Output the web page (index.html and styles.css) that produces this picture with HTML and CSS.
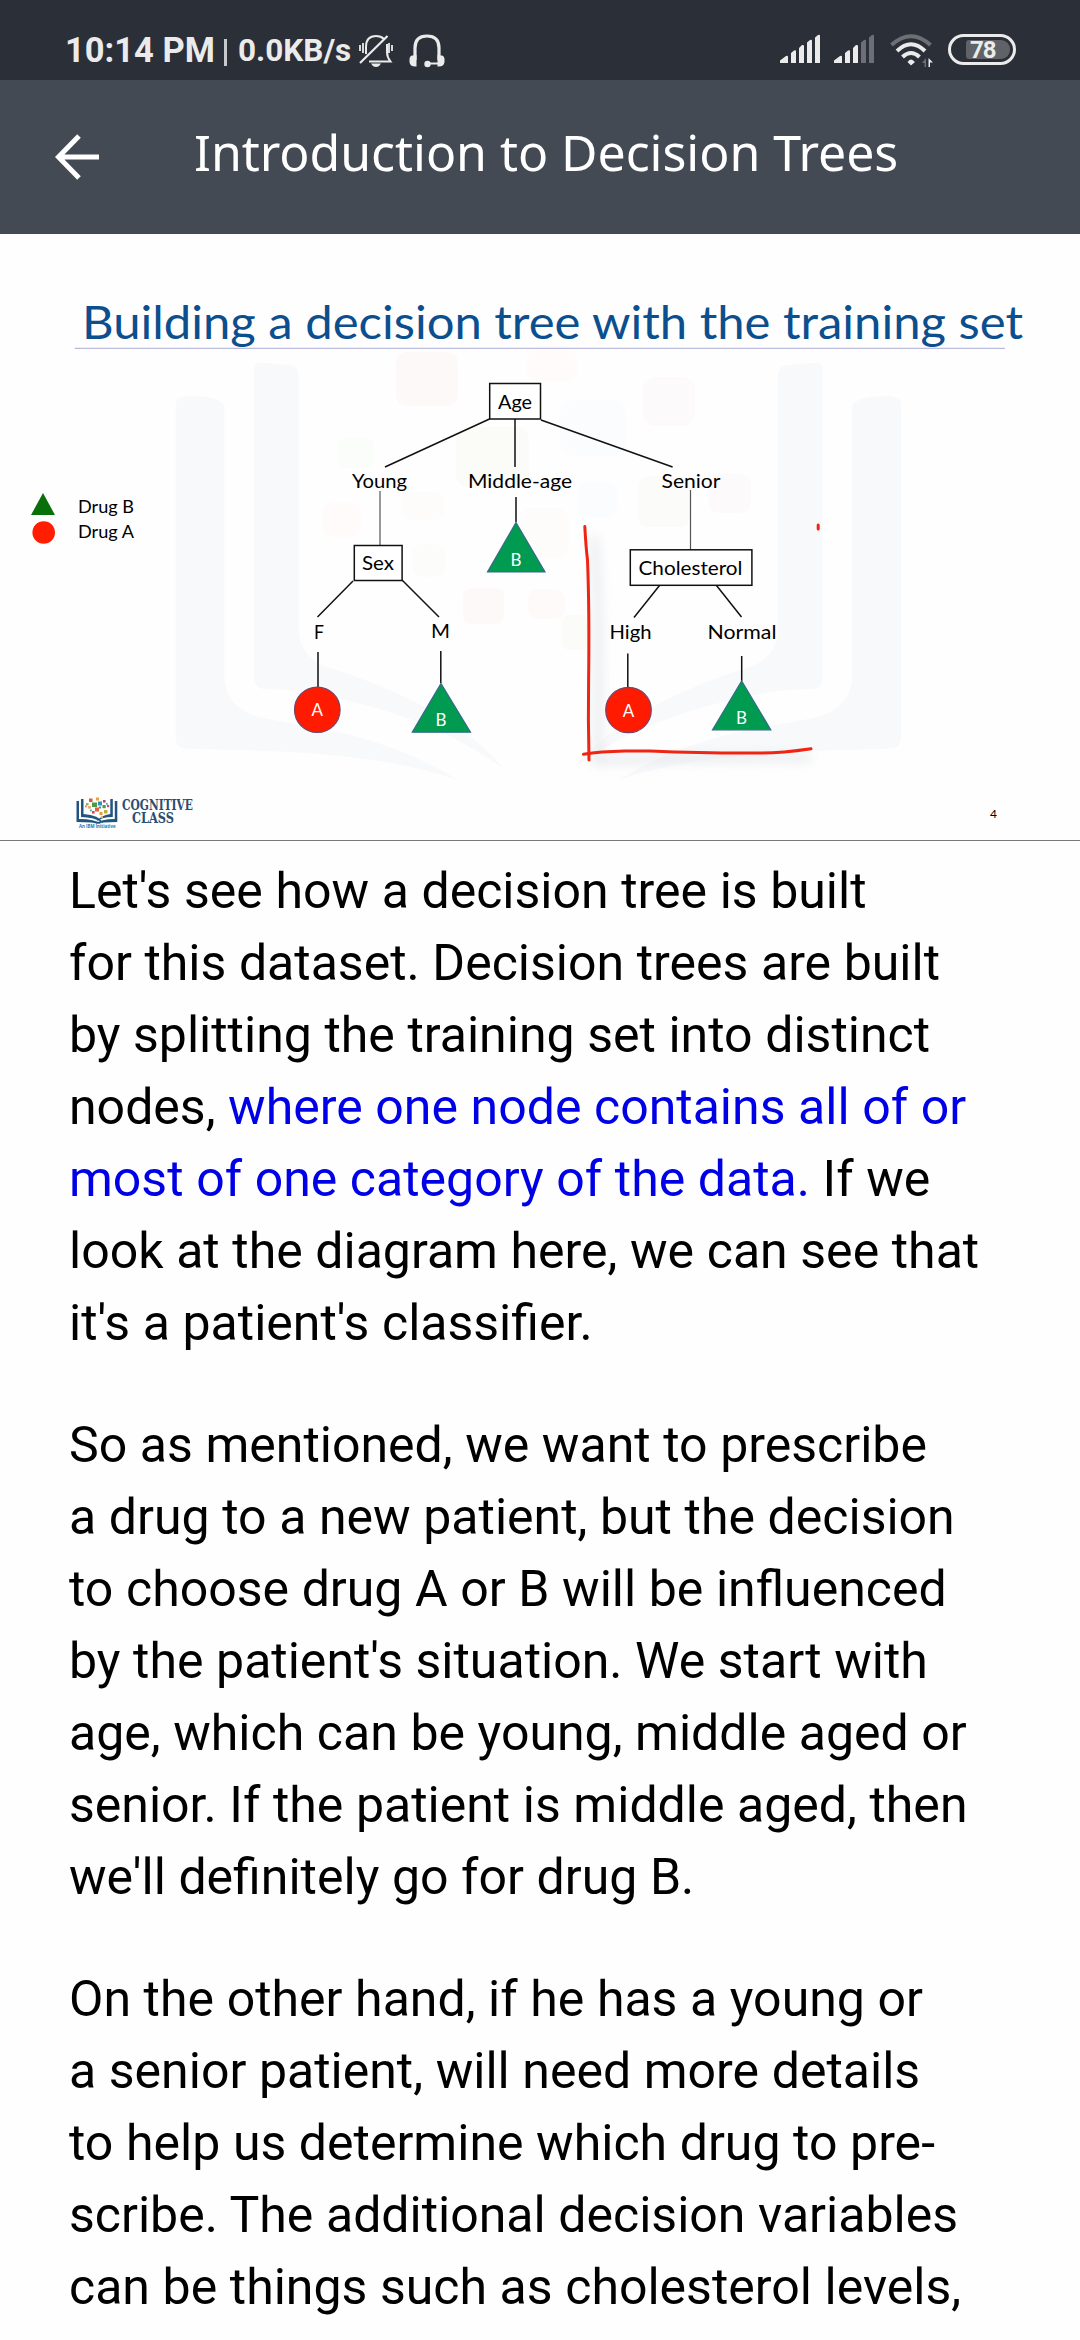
FILE: index.html
```
<!DOCTYPE html>
<html lang="en">
<head>
<meta charset="utf-8">
<title>Introduction to Decision Trees</title>
<link rel="stylesheet" href="styles.css">
</head>
<body>
<div class="status">
  <div class="status-left">
    <span class="clock">10:14 PM</span><span class="divider"></span><span class="speed">0.0KB/s</span>
    <svg class="bell" width="34" height="34" viewBox="0 0 34 34" fill="none" stroke="#ebebeb" stroke-width="2">
      <path d="M7 20V13Q7 2 17 2Q22 2 25 5M28 10V18Q28 23 31.500 27.500H10"/>
      <path d="M1 29L28.500 2" stroke-width="2.200"/>
      <path d="M1 11V17M4 9V19M30 9V19M33 11V17" stroke-width="1.800"/>
      <path d="M12 29.500H22Q20 33 17 33Q14 33 12 29.500Z" fill="#ebebeb" stroke="none"/>
    </svg>
    <svg class="headset" width="36" height="34" viewBox="0 0 36 34" fill="none" stroke="#ebebeb">
      <path d="M6 26V14Q6 2 18 2T30 14V26" stroke-width="3.200"/>
      <path d="M7.500 21V32.500Q1 33 .500 28V25Q1 21 4 21.500ZM28.500 21V32.500Q35 33 35.500 28V25Q35 21 32 21.500Z" fill="#ebebeb" stroke="none"/>
      <path d="M19 29.500H30" stroke-width="2"/><circle cx="18.500" cy="30" r="3.200" fill="#ebebeb" stroke="none"/>
    </svg>
  </div>
  <div class="status-right">
    <svg class="signal" width="40" height="30" viewBox="0 0 40 30" fill="#ebebeb">
      <path d="M0 29V26.500L6 22Q8 21 8 23V29ZM11 29V19L14 16.500Q16 16 16 17V29ZM19 29V14L22 11Q24 10.500 24 12V29ZM27 29V8.500L30 6Q32 5 32 7V29ZM35 29V3.500L38 1Q40 0 40 2V29Z"/>
    </svg>
    <svg class="signal second" width="40" height="30" viewBox="0 0 40 30" fill="#ebebeb">
      <path d="M0 29V26.500L6 22Q8 21 8 23V29ZM11 29V19L14 16.500Q16 16 16 17V29ZM19 29V14L22 11Q24 10.500 24 12V29Z"/>
      <path d="M27 29V8.500L30 6Q32 5 32 7V29ZM35 29V3.500L38 1Q40 0 40 2V29Z" fill="#6c6f75"/>
    </svg>
    <svg class="wifi" width="44" height="34" viewBox="0 0 44 34" fill="none" stroke="#ebebeb" stroke-width="4">
      <path d="M1.500 11Q21 -6.500 40.500 11" stroke="#6c6f75"/>
      <path d="M7 17Q21 3.500 35 17M12.500 23Q21 15 29.500 23"/>
      <path d="M17.500 28L19.500 26Q21 25 22.500 26L25 28L21.500 31Q21 31.500 20.500 31Z" fill="#ebebeb" stroke="none"/>
      <path d="M36 24V33H34.500V29H32Z" fill="#6c6f75" stroke="none"/><path d="M38.500 33V24L43 28.500H40V33Z" fill="#ebebeb" stroke="none"/>
    </svg>
    <div class="battery"><span class="level">78</span></div>
  </div>
</div>
<header class="appbar">
  <svg class="back" width="44" height="46" viewBox="0 0 44 46" fill="none" stroke="#fff" stroke-width="5"><path d="M44 23H4M24 2L3.500 23L24 44"/></svg>
  <h1>Introduction to Decision Trees</h1>
</header>
<figure class="slide">
<svg width="1080" height="606" viewBox="0 234 1080 606">
  <defs>
    <g id="cover">
      <path d="M175.600 404Q176 397 188 396Q224 396 224.500 408V680Q226 706 258 717L300 725Q390 738 458 780Q390 757 290 752L186 748.500Q175.600 748 175.600 738Z"/>
      <path d="M254 368Q254 362 264 363L290 365Q298 366 298.500 374V630Q300 656 324 666Q450 705 503 768Q420 708 290 690L264 689Q254 688 254 678Z"/>
    </g>
    <filter id="soft" x="-30%" y="-30%" width="160%" height="160%"><feGaussianBlur stdDeviation="6"/></filter>
  </defs>
  <g class="watermark">
    <use href="#cover"/><use href="#cover" transform="matrix(-1 0 0 1 1076.600 0)"/>
  </g>
  <g class="tiles">
    <rect x="396" y="352" width="62" height="54" rx="10" fill="#fff7f7"/>
    <rect x="527" y="350" width="50" height="31" rx="10" fill="#fefaf8"/>
    <rect x="643" y="377" width="52" height="49" rx="13" fill="#fcf8fa"/>
    <rect x="560" y="400" width="66" height="56" rx="14" fill="#fafcfe"/>
    <rect x="337" y="438" width="37" height="30" rx="8" fill="#fafdfa"/>
    <rect x="456" y="427" width="73" height="60" rx="12" fill="#fafcf6"/>
    <rect x="638" y="476" width="52" height="51" rx="10" fill="#fafcf7"/>
    <rect x="709" y="474" width="42" height="39" rx="10" fill="#fdf8fa"/>
    <rect x="577" y="482" width="40" height="35" rx="10" fill="#f9fbfe"/>
    <rect x="323" y="503" width="38" height="34" rx="9" fill="#fefaf9"/>
    <rect x="402" y="492" width="42" height="28" rx="9" fill="#fefcfa"/>
    <rect x="412" y="544" width="33" height="33" rx="9" fill="#fbfdfa"/>
    <rect x="463" y="588" width="41" height="36" rx="8" fill="#fef7f7"/>
    <rect x="528" y="589" width="37" height="30" rx="9" fill="#fef9f8"/>
    <rect x="519" y="508" width="50" height="50" rx="12" fill="#fdfbf9"/>
    <rect x="562" y="615" width="27" height="35" rx="8" fill="#fafbf5"/>
  </g>
  <path d="M74.700 348.300H1005" stroke="#bcbcdf" stroke-width="1.200"/>
  <text class="heading" x="82" y="339" textLength="941" lengthAdjust="spacingAndGlyphs">Building a decision tree with the training set</text>

  <path d="M43 493L55 515H31Z" fill="#087008"/><circle cx="43.700" cy="532.500" r="11.300" fill="#ff1e00"/>
  <g class="legend">
    <text x="78" y="513" textLength="56" lengthAdjust="spacingAndGlyphs">Drug B</text>
    <text x="78" y="537.500" textLength="56" lengthAdjust="spacingAndGlyphs">Drug A</text>
  </g>

  <g filter="url(#soft)" fill="none" stroke="#dcdfe2" stroke-width="5">
    <path d="M593 536Q600 570 598 760"/><path d="M592 761Q720 757 811 758"/>
  </g>
  <g class="branches">
    <path d="M489.500 419L385 467M515 419V467M541 420L672.600 467M516 497V522"/>
    <path d="M353 581L317.500 617M402 580L439 617M659.500 585.500L634 617.500M716.500 585.500L741.500 617"/>
    <path d="M318 652V687M440.800 651V683M627.800 653.500V687M741.700 656V681"/>
    <path d="M380 491V545M690.500 490V550" stroke="#555" stroke-width="1.200"/>
  </g>
  <g class="boxes">
    <rect x="489.700" y="383.500" width="50.800" height="35.500"/>
    <rect x="354.300" y="545.500" width="47.800" height="35"/>
    <rect x="630.300" y="549.800" width="121.600" height="35.500"/>
  </g>
  <g class="labels">
    <text x="515" y="409" textLength="34" lengthAdjust="spacingAndGlyphs">Age</text>
    <text x="379.500" y="488.300" textLength="55" lengthAdjust="spacingAndGlyphs">Young</text>
    <text x="520" y="488.300" textLength="104" lengthAdjust="spacingAndGlyphs">Middle-age</text>
    <text x="691" y="488.300" textLength="59" lengthAdjust="spacingAndGlyphs">Senior</text>
    <text x="378" y="570.300" textLength="32" lengthAdjust="spacingAndGlyphs">Sex</text>
    <text x="690.500" y="574.700" textLength="104" lengthAdjust="spacingAndGlyphs">Cholesterol</text>
    <text x="319" y="638.500" textLength="10" lengthAdjust="spacingAndGlyphs">F</text>
    <text x="440.500" y="637.500" textLength="19" lengthAdjust="spacingAndGlyphs">M</text>
    <text x="630.500" y="639" textLength="42" lengthAdjust="spacingAndGlyphs">High</text>
    <text x="742" y="639" textLength="69" lengthAdjust="spacingAndGlyphs">Normal</text>
  </g>
  <g class="drug-b">
    <path d="M516 522.500L545 572H487.500Z"/><path d="M441 683.500L470.500 732.200H412.300Z"/><path d="M741.700 681L770.800 729.800H712.500Z"/>
  </g>
  <g class="drug-a"><ellipse cx="317.300" cy="709.800" rx="22.800" ry="22.700"/><ellipse cx="628.500" cy="710" rx="22.800" ry="22.700"/></g>
  <g class="leaf">
    <text x="516" y="565.700">B</text><text x="441" y="725.500">B</text><text x="741.500" y="724">B</text>
    <text x="317.300" y="716">A</text><text x="628.500" y="717">A</text>
  </g>
  <g class="pen">
    <path d="M584.800 526.500Q586 548 587.500 560Q589.500 610 588.600 680Q588 720 589 760"/>
    <path d="M583.500 754.300Q600 751.500 625 751H650Q710 753.500 762 753Q782 753 811 748.700"/>
    <path d="M818.200 525V529"/>
  </g>

  <g class="book">
    <path d="M76.500 801H79V819Q95 819 101 824Q93 822 76.500 822ZM81 799H83.500V814Q99 815 103.500 823Q94 817 81 817Z"/>
    <path d="M117.300 801H114.800V819Q101 819 95 824Q101 822 117.300 822ZM112.800 799H110.300V814Q101 815 96 822Q101 817 112.800 817Z"/>
  </g>
  <g>
    <rect x="89" y="798.500" width="3.500" height="3.500" fill="#e2533b"/><rect x="96" y="797.500" width="3" height="3" fill="#eaa23b"/>
    <rect x="103" y="800" width="2.600" height="2.600" fill="#a74d79"/><rect x="98" y="801.500" width="4" height="4" fill="#3590ba"/>
    <rect x="92" y="802.500" width="5" height="4.500" fill="#4b9b42"/><rect x="86" y="803" width="2.500" height="2.500" fill="#92b75b"/>
    <rect x="102.500" y="805" width="3.200" height="3.200" fill="#509b4b"/><rect x="107" y="805" width="2.200" height="2.200" fill="#db4a6a"/>
    <rect x="88" y="806" width="3" height="2.600" fill="#e7ad72"/><rect x="95" y="807.500" width="4" height="4" fill="#e4603d"/>
    <rect x="104" y="810" width="3.500" height="3.500" fill="#b9b53a"/><rect x="99.500" y="812" width="3" height="3" fill="#eb963b"/>
    <rect x="92" y="811" width="2.600" height="2.600" fill="#d84561"/><rect x="85" y="805.500" width="1.800" height="1.800" fill="#e58942"/>
    <rect x="90" y="809.500" width="1.800" height="1.800" fill="#58a0bd"/><rect x="101" y="816" width="2" height="2" fill="#e9b45a"/>
    <rect x="99" y="806.500" width="2" height="2" fill="#3590ba"/><rect x="106" y="803" width="1.800" height="1.800" fill="#4aaea0"/>
  </g>
  <g class="brand">
    <text x="122" y="810.300" textLength="71" lengthAdjust="spacingAndGlyphs">COGNITIVE</text>
    <text x="132" y="823" textLength="42" lengthAdjust="spacingAndGlyphs">CLASS</text>
  </g>
  <text class="tagline" x="79" y="828.300" textLength="36.500" lengthAdjust="spacingAndGlyphs">An IBM Initiative</text>
  <text class="page" x="990" y="817.700">4</text>
</svg>
</figure>
<main class="article">
  <p>Let's see how a decision tree is built<br>for this dataset. Decision trees are built<br>by splitting the training set into distinct<br>nodes, <span class="mark">where one node contains all of or<br>most of one category of the data.</span> If we<br>look at the diagram here, we can see that<br>it's a patient's classifier.</p>
  <p>So as mentioned, we want to prescribe<br>a drug to a new patient, but the decision<br>to choose drug A or B will be influenced<br>by the patient's situation. We start with<br>age, which can be young, middle aged or<br>senior. If the patient is middle aged, then<br>we'll definitely go for drug B.</p>
  <p>On the other hand, if he has a young or<br>a senior patient, will need more details<br>to help us determine which drug to pre-<br>scribe. The additional decision variables<br>can be things such as cholesterol levels,</p>
</main>
</body>
</html>
```
FILE: styles.css
```
* { box-sizing: border-box; }
html, body { margin: 0; background: #fefefe; }
body { width: 1080px; height: 2340px; overflow: hidden; font-family: Roboto, sans-serif; color: #000; }

.status { display: flex; justify-content: space-between; height: 80px; padding: 0 64px 0 65px; background: #2b2f37; color: #ebebeb; }
.status-left, .status-right { display: flex; align-items: flex-start; padding-top: 33px; white-space: nowrap; }
.clock, .speed { font-weight: 700; line-height: 40px; margin-top: -3px; }
.clock { font-size: 34.500px; width: 159px; }
.divider { width: 3px; height: 27px; margin: 6px 11px 0 0; background: #c8c9ca; }
.speed { font-size: 31.500px; width: 121px; margin-top: -2px; }
.bell { margin-top: 1px; }
.headset { margin: 1px 0 0 16px; }
.signal { margin-top: 1px; }
.second { margin-left: 14px; }
.wifi { margin: 1px 0 0 16px; }
.battery { width: 68px; height: 31px; margin: 1px 0 0 14px; border: 3px solid #ebebeb; border-radius: 16px; padding: 3px 3px 3px 15px; }
.level { display: block; height: 19px; line-height: 20px; padding-left: 4px; border-radius: 3px 9px 9px 3px; background: #5f6267; font-size: 24px; font-weight: 700; letter-spacing: -1px; }

.appbar { display: flex; align-items: center; height: 154px; padding: 0 0 0 55px; background: #444a53; color: #fff; }
.back { flex: none; }
.appbar h1 { margin: -11px 0 0 95px; font: 400 50px/68px "Noto Sans", sans-serif; letter-spacing: -.05px; white-space: nowrap; }

.slide { margin: 0; height: 607px; border-bottom: 1px solid #77787a; }
.slide svg { display: block; }
.watermark { fill: #f8f9fb; }
.tiles { opacity: .65; }
.heading { font: 400 46px Lato, sans-serif; fill: #0b4f8f; }
.legend, .labels, .leaf, .page { font-family: Lato, sans-serif; }
.legend { font-size: 18px; }
.labels { font-size: 20px; text-anchor: middle; }
.leaf { font-size: 17px; text-anchor: middle; fill: #fff; }
.page { font-size: 12px; }
.branches { fill: none; stroke: #111; stroke-width: 1.500; }
.boxes { fill: #fff; stroke: #111; stroke-width: 1.500; }
.drug-b { fill: #009a50; stroke: #356a88; stroke-width: 1.200; }
.drug-a { fill: #ff1b00; stroke: #754568; stroke-width: 1.200; }
.pen { fill: none; stroke: #f02413; stroke-width: 3; stroke-linecap: round; }
.book { fill: #215580; }
.brand { font: 700 15.500px "DejaVu Serif", serif; fill: #294e70; }
.tagline { font: 700 5px "Open Sans", sans-serif; fill: #2676ad; }

.article { padding: 14px 0 0 69px; font-size: 50px; line-height: 72px; word-spacing: .2px; white-space: nowrap; }
.article p { margin: 0 0 50px; }
.mark { color: #0000e6; }
```
